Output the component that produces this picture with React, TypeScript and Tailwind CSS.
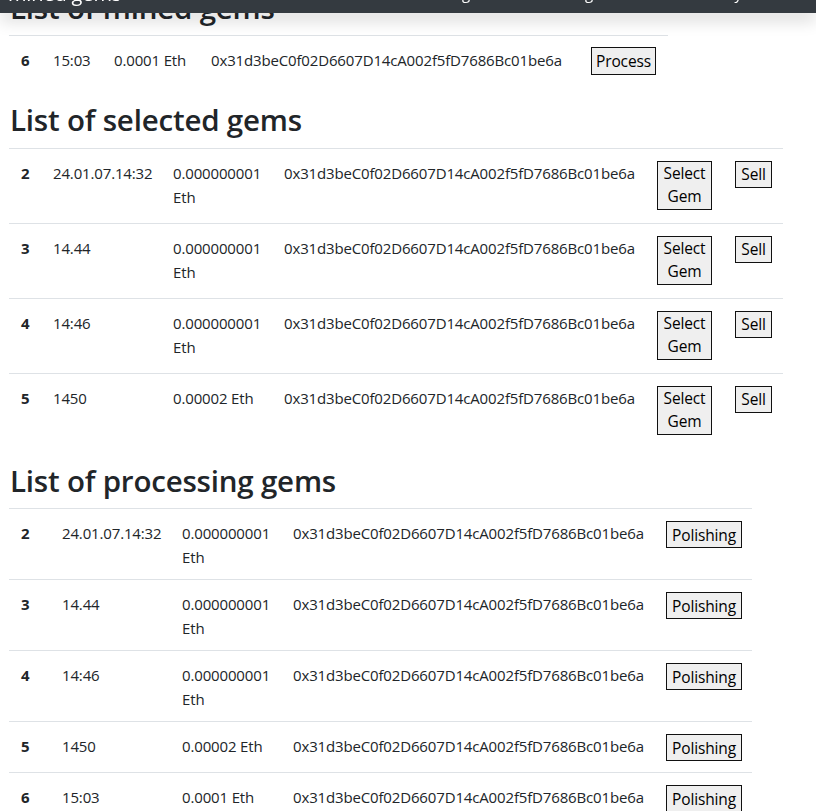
import React from "react"

const ADDR = "0x31d3beC0f02D6607D14cA002f5fD7686Bc01be6a"

type Gem = { id: number; date: string; amount: string[] }

const mined: Gem[] = [{ id: 6, date: "15:03", amount: ["0.0001 Eth"] }]

const selected: Gem[] = [
  { id: 2, date: "24.01.07.14:32", amount: ["0.000000001", "Eth"] },
  { id: 3, date: "14.44", amount: ["0.000000001", "Eth"] },
  { id: 4, date: "14:46", amount: ["0.000000001", "Eth"] },
  { id: 5, date: "1450", amount: ["0.00002 Eth"] },
]

const processing: Gem[] = [
  { id: 2, date: "24.01.07.14:32", amount: ["0.000000001", "Eth"] },
  { id: 3, date: "14.44", amount: ["0.000000001", "Eth"] },
  { id: 4, date: "14:46", amount: ["0.000000001", "Eth"] },
  { id: 5, date: "1450", amount: ["0.00002 Eth"] },
  { id: 6, date: "15:03", amount: ["0.0001 Eth"] },
]

function Btn({ children, className = "" }: { children: React.ReactNode; className?: string }) {
  return (
    <button
      className={`flex items-center justify-center border border-[#111] bg-[#efefef] text-center text-[15.5px] text-black ${className}`}
    >
      {children}
    </button>
  )
}

function Amount({ lines }: { lines: string[] }) {
  return (
    <>
      {lines.map((l) => (
        <div key={l} className="whitespace-nowrap">
          {l}
        </div>
      ))}
    </>
  )
}

function Heading({ children }: { children: React.ReactNode }) {
  return (
    <h2 className="mb-2 pl-px text-[29.5px] font-semibold leading-[38.4px] tracking-[-0.2px] text-[#212529]">
      {children}
    </h2>
  )
}

export default function App() {
  return (
    <div className="min-h-screen bg-white font-['Open_Sans',sans-serif] text-[15px] leading-6 tracking-[-0.15px] text-[#212529]">
      {/* navbar, page is scrolled so only its bottom edge shows */}
      <nav className="fixed left-0 right-0 top-0 z-10 h-[13px] overflow-hidden bg-[#343a40] shadow-[0_8px_16px_rgba(0,0,0,0.15)]">
        <div className="flex items-start pl-2 text-white">
          <span className="-mt-[18px] w-[112px] whitespace-nowrap text-[20px] leading-[24px]">mined gems</span>
          <span className="-mt-[19px] w-[350px] text-right">Mining</span>
          <span className="-mt-[19px] w-[123px] text-right">Processing</span>
          <span className="-mt-[19px] w-[149px] text-right">Buy</span>
        </div>
      </nav>

      <div className="-mt-[11px] pl-[9px]">
        <Heading>List of mined gems</Heading>
        <div className="mb-4 w-[659px]">
          {mined.map((g) => (
            <div
              key={g.id}
              className="grid h-[50px] grid-cols-[32px_61px_97px_380px_89px] border-t border-[#dee2e6]"
            >
              <div className="px-3 pt-3 font-bold">{g.id}</div>
              <div className="px-3 pt-3 whitespace-nowrap">{g.date}</div>
              <div className="px-3 pt-3">
                <Amount lines={g.amount} />
              </div>
              <div className="px-3 pt-3 whitespace-nowrap">{ADDR}</div>
              <div className="px-3 pt-3">
                <Btn className="-mt-px h-[28px] w-[65px]">Process</Btn>
              </div>
            </div>
          ))}
        </div>

        <Heading>List of selected gems</Heading>
        <div className="mb-[14px] w-[774px]">
          {selected.map((g) => (
            <div
              key={g.id}
              className="grid h-[75px] grid-cols-[32px_120px_111px_373px_78px_60px] border-t border-[#dee2e6]"
            >
              <div className="px-3 pt-3 font-bold">{g.id}</div>
              <div className="px-3 pt-3 whitespace-nowrap">{g.date}</div>
              <div className="px-3 pt-3">
                <Amount lines={g.amount} />
              </div>
              <div className="px-3 pt-3 whitespace-nowrap">{ADDR}</div>
              <div className="px-3 pt-3">
                <Btn className="h-[49px] w-[55px] leading-[23px]">
                  Select
                  <br />
                  Gem
                </Btn>
              </div>
              <div className="px-3 pt-3">
                <Btn className="h-[27px] w-[37px]">Sell</Btn>
              </div>
            </div>
          ))}
        </div>

        <Heading>List of processing gems</Heading>
        <div className="w-[743px]">
          {processing.map((g) => (
            <div
              key={g.id}
              className={`grid grid-cols-[41px_120px_111px_373px_98px] border-t border-[#dee2e6] ${
                g.amount.length > 1 ? "h-[71px]" : "h-[51px]"
              }`}
            >
              <div className="px-3 pt-3 font-bold">{g.id}</div>
              <div className="px-3 pt-3 whitespace-nowrap">{g.date}</div>
              <div className="px-3 pt-3">
                <Amount lines={g.amount} />
              </div>
              <div className="px-3 pt-3 whitespace-nowrap">{ADDR}</div>
              <div className="px-3 pt-3">
                <Btn className="h-[27px] w-[76px]">Polishing</Btn>
              </div>
            </div>
          ))}
        </div>
      </div>
    </div>
  )
}
